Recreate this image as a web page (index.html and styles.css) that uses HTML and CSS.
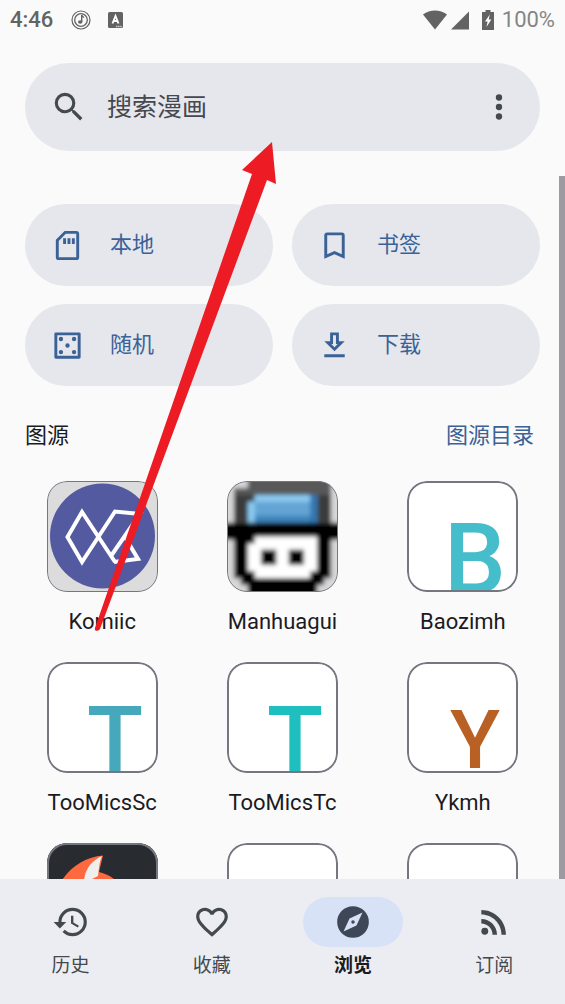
FILE: index.html
```html
<!DOCTYPE html>
<html lang="zh-CN">
<head>
<meta charset="utf-8">
<meta name="viewport" content="width=device-width, initial-scale=1">
<title>浏览</title>
<link rel="stylesheet" href="styles.css">
</head>
<body>
<div class="app">
  <header class="status">
    <span class="clock">4:46</span>
    <svg class="status-icon" viewBox="0 0 20 20" aria-hidden="true"><g fill="none" stroke="currentColor"><circle cx="10" cy="10" r="9" stroke-width="1.2"/><circle cx="10" cy="10" r="6.3" stroke-width="1.3"/></g><ellipse cx="9.2" cy="12" rx="2.2" ry="1.8" fill="currentColor"/><path d="M10 5h1.4l2 2.4-.7.5-1.3-1V12H10z" fill="currentColor"/></svg>
    <svg class="status-icon" viewBox="0 0 20 20" aria-hidden="true"><rect x="2" y="2" width="15" height="16" rx="1.500" fill="currentColor"/><path d="M6.500 13.500L9.500 6l3 7.500M7.500 11h4" fill="none" stroke="#fff" stroke-width="1.900"/><path d="M10 16.500h6" stroke="#ccc" stroke-width="1.500" stroke-dasharray="1.500 .6"/></svg>
    <span class="spacer"></span>
    <div class="signals">
      <svg class="wifi" viewBox="0 0 24 20" aria-hidden="true"><path d="M0 4.500C7-1 17-1 24 4.500L12 19.500z" fill="currentColor"/></svg>
      <svg class="cell" viewBox="0 0 18 20" aria-hidden="true"><path d="M18 1.500V19.500H0z" fill="currentColor"/></svg>
      <svg class="battery" viewBox="0 0 12 20" aria-hidden="true"><path d="M3.500 0h5v2H12v18H0V2h3.500z" fill="currentColor"/><path d="M7.800 4.500L3 11.500h2.600L4.500 17 9.300 9.600H6.700z" fill="#fff"/></svg>
      <span class="percent">100%</span>
    </div>
  </header>

  <main class="content">
    <form class="search" role="search">
      <svg class="nav-icon" viewBox="0 0 24 24" aria-hidden="true"><path fill="currentColor" d="M15.500 14h-.79l-.28-.27A6.471 6.471 0 0 0 16 9.500 6.500 6.500 0 1 0 9.500 16c1.610 0 3.090-.59 4.230-1.570l.27.28v.79l5 4.990L20.490 19l-4.990-5zm-6 0C7.010 14 5 11.990 5 9.500S7.010 5 9.500 5 14 7.010 14 9.500 11.990 14 9.500 14z"/></svg>
      <input class="search-input" type="text" placeholder="搜索漫画" aria-label="搜索漫画">
      <button class="more" type="button" aria-label="更多"><svg class="nav-icon" viewBox="0 0 24 24"><g fill="currentColor"><circle cx="12" cy="6" r="2"/><circle cx="12" cy="12" r="2"/><circle cx="12" cy="18" r="2"/></g></svg></button>
    </form>

    <div class="actions">
      <button class="action" type="button"><svg class="action-icon" viewBox="0 0 24 24"><path fill="currentColor" d="M18 4v16H6V8.830L10.830 4H18m0-2h-8L4 8v12a2 2 0 0 0 2 2h12a2 2 0 0 0 2-2V4a2 2 0 0 0-2-2M9 7h2v4H9V7m3 0h2v4h-2V7m3 0h2v4h-2V7z"/></svg><span class="action-label">本地</span></button>
      <button class="action" type="button"><svg class="action-icon" viewBox="0 0 24 24"><path fill="currentColor" d="M17 18l-5-2.180L7 18V5h10m0-2H7a2 2 0 0 0-2 2v16l7-3 7 3V5a2 2 0 0 0-2-2z"/></svg><span class="action-label">书签</span></button>
      <button class="action" type="button"><svg class="action-icon" viewBox="0 0 24 24"><path fill="none" stroke="currentColor" stroke-width="2" stroke-linejoin="round" d="M4 4h16v16H4z"/><g fill="currentColor"><circle cx="7.500" cy="7.500" r="1.500"/><circle cx="16.500" cy="7.500" r="1.500"/><circle cx="12" cy="12" r="1.500"/><circle cx="7.500" cy="16.500" r="1.500"/><circle cx="16.500" cy="16.500" r="1.500"/></g></svg><span class="action-label">随机</span></button>
      <button class="action" type="button"><svg class="action-icon" viewBox="0 0 24 24"><path fill="currentColor" d="M13 5v6h1.170L12 13.170 9.830 11H11V5h2m2-2H9v6H5l7 7 7-7h-4V3m4 15H5v2h14v-2z"/></svg><span class="action-label">下载</span></button>
    </div>

    <div class="section-head">
      <h2 class="section-title">图源</h2>
      <a class="section-link" href="#catalog">图源目录</a>
    </div>

    <div class="sources">
      <a class="source" href="#komiic">
        <span class="tile tile-thin"><svg class="art" viewBox="0 0 111 111"><path fill="#dcdcdc" d="M0 0h111v111H0z"/><circle cx="55.500" cy="55" r="52.500" fill="#535a9f"/><g fill="none" stroke="#fff" stroke-width="4"><path d="M68 81L35 31 20.500 56 35 81 68 30.500 93 33 64 75"/><path d="M67 81L91 78 78 56"/></g></svg></span>
        <span class="name">Komiic</span>
      </a>
      <a class="source" href="#manhuagui">
        <span class="tile tile-thin"><svg class="art" viewBox="0 0 16 16">
          <defs><filter id="soft" x="-10%" y="-10%" width="120%" height="120%"><feGaussianBlur stdDeviation="0.280"/></filter></defs>
          <g filter="url(#soft)">
            <path fill="#d8d8d8" d="M-1-1h18v18H-1z"/>
            <path fill="#585858" d="M3-1h12v3H1V1h2z"/>
            <path fill="#3a3a3a" d="M1 2h3v4H1zM13 2h2v4h-2z"/>
            <path fill="#64a4d4" d="M3 3h1V2h9v4H3z"/>
            <path fill="#8ccaf3" d="M4 2h8v1H4zM3 3h1v3H3z"/>
            <path fill="#3d84bb" d="M4 5h9v1H4z"/>
            <path fill="#2d77b2" d="M12 2h1v4h-1z"/>
            <path fill="#000" d="M-1 6h18v2.500h-2V14h-1v1h-1v2H3v-2H2v-1H1V8.500h-2z"/>
            <path fill="#fff" d="M4 8h9v5h-1v1H4v-1H3V9h1z"/>
            <path fill="#000" d="M4.900 9.900h2.200v2.200H4.900zM8.900 9.900h2.200v2.200H8.900z"/>
          </g></svg></span>
        <span class="name">Manhuagui</span>
      </a>
      <a class="source" href="#baozimh">
        <span class="tile"><svg class="art" viewBox="0 0 111 111" aria-hidden="true"><text class="letter letter-b" x="68" y="112">B</text></svg></span>
        <span class="name">Baozimh</span>
      </a>
      <a class="source" href="#toomicssc">
        <span class="tile"><svg class="art" viewBox="0 0 111 111" aria-hidden="true"><text class="letter letter-sc" x="68" y="110">T</text></svg></span>
        <span class="name">TooMicsSc</span>
      </a>
      <a class="source" href="#toomicstc">
        <span class="tile"><svg class="art" viewBox="0 0 111 111" aria-hidden="true"><text class="letter letter-tc" x="68" y="110">T</text></svg></span>
        <span class="name">TooMicsTc</span>
      </a>
      <a class="source" href="#ykmh">
        <span class="tile"><svg class="art" viewBox="0 0 111 111" aria-hidden="true"><text class="letter letter-y" x="68" y="106">Y</text></svg></span>
        <span class="name">Ykmh</span>
      </a>
      <a class="source" href="#fox" aria-label="图源">
        <span class="tile"><svg class="art" viewBox="0 0 111 111"><path fill="#282c30" d="M0 0h111v111H0z"/><path fill="#ff6940" d="M12 42C22 24 38 14 56 12.500L52 29c8 2 14 5 20 12v50H12z"/><path fill="#efefef" d="M55 13c-11 5-18 14-18 27l14-7c1-7 1-13 4-20z"/></svg></span>
      </a>
      <a class="source" href="#more-1" aria-label="图源"><span class="tile"></span></a>
      <a class="source" href="#more-2" aria-label="图源"><span class="tile"></span></a>
    </div>
    <div class="scrollbar"></div>
  </main>

  <nav class="tabs">
    <a class="tab" href="#history"><span class="pill"><svg class="nav-icon" viewBox="0 0 24 24"><path fill="currentColor" d="M13.500 8H12v5l4.280 2.540.72-1.210-3.500-2.080V8M13 3a9 9 0 0 0-9 9H1l3.960 4.030L9 12H6a7 7 0 1 1 7 7c-1.930 0-3.680-.79-4.940-2.060l-1.420 1.420A8.896 8.896 0 0 0 13 21a9 9 0 0 0 0-18"/></svg></span>历史</a>
    <a class="tab" href="#favourites"><span class="pill"><svg class="nav-icon" viewBox="0 0 24 24"><path fill="currentColor" d="M16.500 3c-1.740 0-3.410.81-4.500 2.090C10.910 3.810 9.240 3 7.500 3 4.420 3 2 5.420 2 8.500c0 3.780 3.400 6.860 8.550 11.540L12 21.350l1.450-1.320C18.600 15.360 22 12.280 22 8.500 22 5.420 19.580 3 16.500 3zm-4.400 15.550l-.1.1-.1-.1C7.140 14.240 4 11.390 4 8.500 4 6.500 5.500 5 7.500 5c1.540 0 3.040.99 3.570 2.360h1.870C13.460 5.990 14.960 5 16.500 5c2 0 3.500 1.500 3.500 3.500 0 2.890-3.140 5.740-7.900 10.050z"/></svg></span>收藏</a>
    <a class="tab tab-active" href="#explore" aria-current="page"><span class="pill"><svg class="nav-icon" viewBox="0 0 24 24"><path fill="currentColor" d="M12 10.900a1.100 1.100 0 1 0 0 2.200 1.100 1.100 0 0 0 0-2.200zM12 2a10 10 0 1 0 0 20 10 10 0 0 0 0-20zm2.190 12.190L6 18l3.810-8.190L18 6l-3.810 8.190z"/></svg></span>浏览</a>
    <a class="tab" href="#feed"><span class="pill"><svg class="nav-icon" viewBox="0 0 24 24"><g fill="currentColor"><circle cx="6.180" cy="17.820" r="2.180"/><path d="M4 4.440v2.830c7.030 0 12.730 5.700 12.730 12.730h2.830c0-8.590-6.970-15.560-15.560-15.560zm0 5.660v2.830c3.900 0 7.070 3.170 7.070 7.070h2.830c0-5.470-4.430-9.900-9.900-9.900z"/></g></svg></span>订阅</a>
  </nav>

  <svg class="pointer" viewBox="0 0 200 500" aria-hidden="true"><path fill="#ed1c24" d="M192 2L162 30l10 4L15 488c-1 3 3 4 5 1L187 40l9 4z"/></svg>
</div>
</body>
</html>
```
FILE: styles.css
```css
* { box-sizing: border-box; }

body {
  margin: 0;
  background: #fafafa;
  color: #1b1b1f;
  font-family: Roboto, "Noto Sans CJK SC", sans-serif;
  font-size: 22px;
}

a { color: inherit; text-decoration: none; }
button { border: 0; background: none; padding: 0; font: inherit; color: inherit; }
svg { display: block; flex: none; }

.app {
  position: relative;
  display: flex;
  flex-direction: column;
  height: 100vh;
  overflow: hidden;
}

.status {
  display: flex;
  flex: none;
  align-items: center;
  height: 39px;
  padding: 0 10px;
  color: #636363;
  line-height: 26px;
}
.clock { font-weight: 500; margin-right: 18px; }
.status-icon { width: 20px; height: 20px; margin-right: 15px; }
.spacer { flex: 1; }
.signals { display: flex; align-items: center; }
.wifi { width: 24px; height: 20px; margin-right: 4px; }
.cell { width: 18px; height: 20px; margin-right: 13px; }
.battery { width: 12px; height: 20px; margin-right: 8px; }
.percent { color: #858585; }

.content {
  position: relative;
  flex: 1;
  min-height: 0;
  overflow: hidden;
  padding-top: 24px;
}

.nav-icon { width: 38px; height: 38px; }

.search {
  display: flex;
  align-items: center;
  height: 88px;
  margin: 0 25px;
  padding: 0 22px 0 25px;
  border-radius: 44px;
  background: #e6e7ed;
  color: #43494c;
}
.search-input {
  flex: 1;
  min-width: 0;
  margin-left: 19px;
  padding: 0;
  border: 0;
  outline: 0;
  background: none;
  color: #45484f;
  font: inherit;
  font-size: 25px;
}
.search-input::placeholder { color: #45484f; opacity: 1; }

.actions {
  display: grid;
  grid-template-columns: 1fr 1fr;
  gap: 18px 19px;
  margin: 53px 25px 0;
}
.action {
  display: flex;
  align-items: center;
  gap: 25px;
  height: 82px;
  padding: 0 25px;
  border-radius: 41px;
  background: #e6e7ed;
  color: #3b6297;
}
.action-icon { width: 35px; height: 35px; }
.action-label { line-height: 32px; }

.section-head {
  display: flex;
  justify-content: space-between;
  margin: 34px 31px 0 25px;
  line-height: 32px;
}
.section-title { margin: 0; font-size: 22px; font-weight: 400; }
.section-link { color: #3b6297; }

.sources {
  display: grid;
  grid-template-columns: repeat(3, 1fr);
  row-gap: 24px;
  margin: 29px 12px 0;
}
.source {
  display: flex;
  flex-direction: column;
  align-items: center;
  gap: 14px;
}
.tile {
  position: relative;
  width: 111px;
  height: 111px;
  overflow: hidden;
  border-radius: 20px;
  background: #fff;
}
.tile::after {
  content: "";
  position: absolute;
  inset: 0;
  border: 2px solid #757780;
  border-radius: 20px;
}
.tile-thin::after { border-width: 1px; }
.art { width: 111px; height: 111px; }
.name { line-height: 32px; }

.letter { font-family: Roboto, sans-serif; font-weight: 500; text-anchor: middle; }
.letter-b { font-size: 98px; fill: #45bdcb; }
.letter-sc { font-size: 92px; fill: #45a8bb; }
.letter-tc { font-size: 92px; fill: #20bfbf; }
.letter-y { font-size: 82px; fill: #b96025; }

.scrollbar {
  position: absolute;
  top: 137px;
  right: 0;
  bottom: 0;
  width: 6px;
  background: #9d9ba1;
}

.tabs {
  display: grid;
  flex: none;
  grid-template-columns: repeat(4, 1fr);
  height: 125px;
  padding-top: 18px;
  background: #ecedf3;
}
.tab {
  display: flex;
  flex-direction: column;
  align-items: center;
  gap: 5px;
  color: #43494c;
  font-size: 19px;
  line-height: 28px;
}
.pill {
  display: flex;
  align-items: center;
  justify-content: center;
  width: 100px;
  height: 50px;
  border-radius: 25px;
}
.tab-active { color: #1b1b1f; font-weight: 700; }
.tab-active .pill { background: #d8e2f6; color: #3d4758; }

.pointer {
  position: absolute;
  top: 140px;
  left: 80px;
  width: 200px;
  height: 500px;
  pointer-events: none;
}
```
